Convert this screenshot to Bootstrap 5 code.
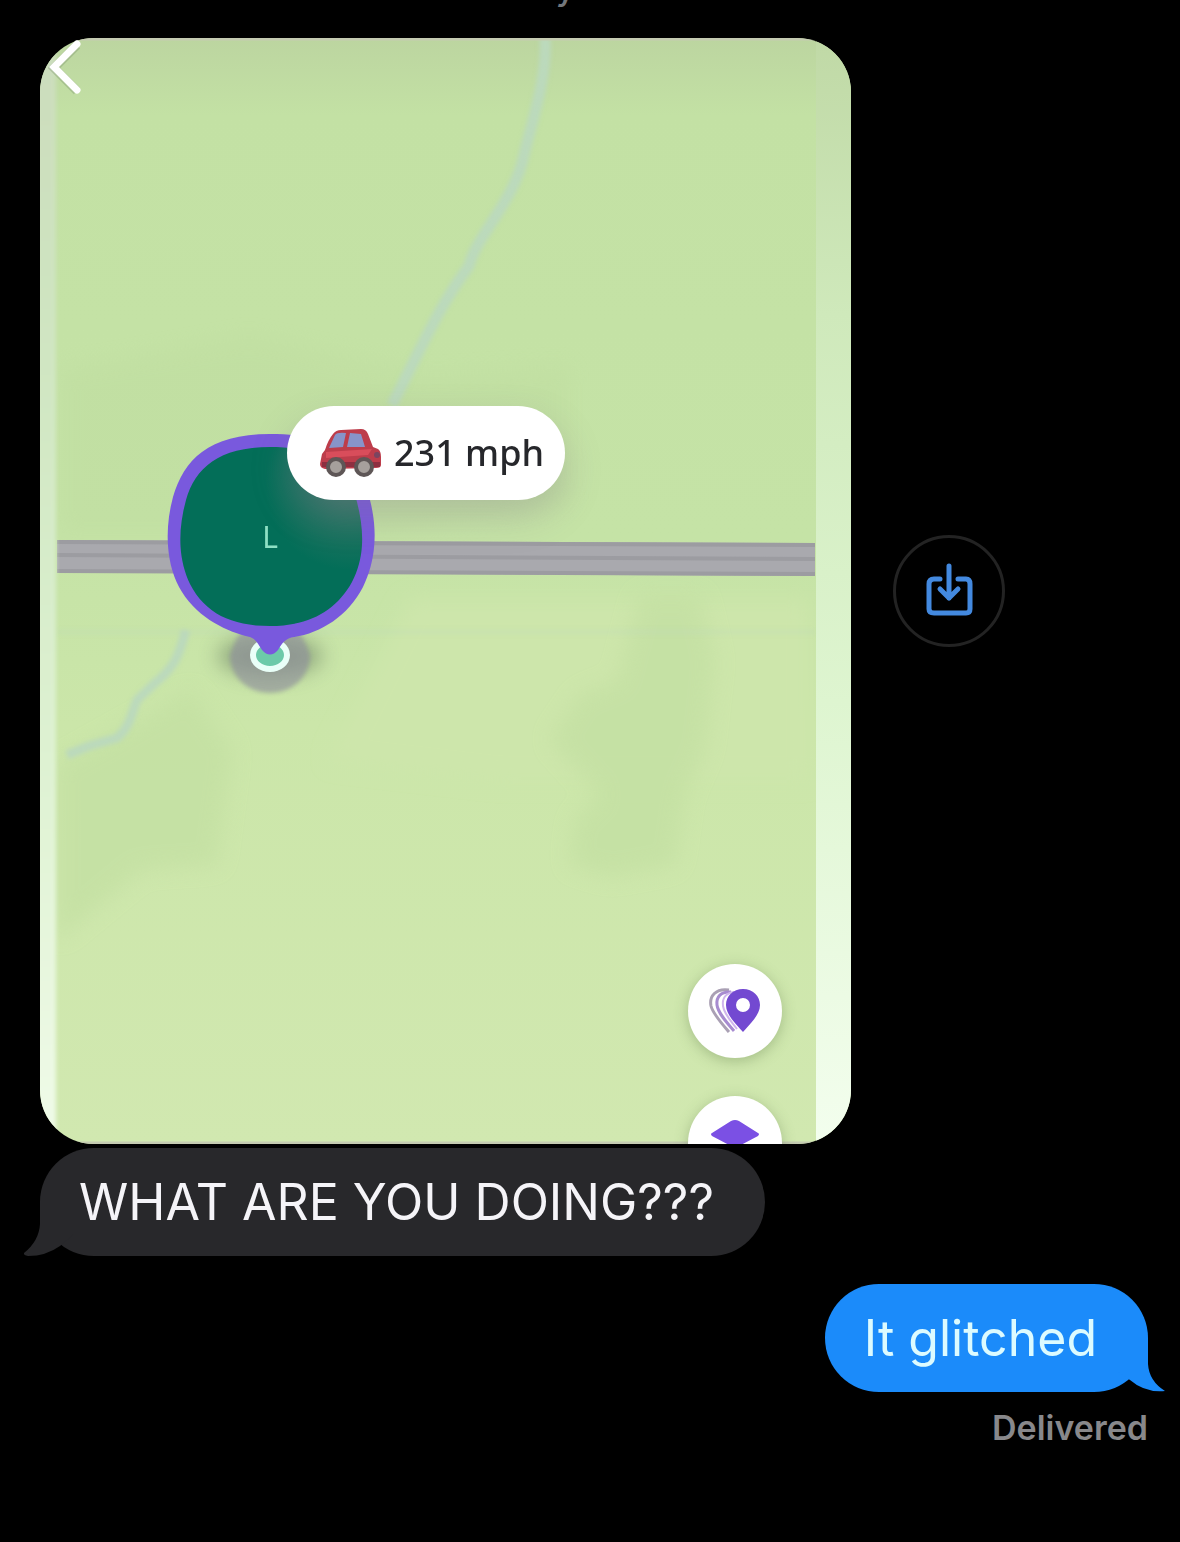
<!DOCTYPE html>
<html lang="en">
<head>
<meta charset="utf-8">
<meta name="viewport" content="width=device-width, initial-scale=1">
<title>Messages</title>
<link href="https://cdn.jsdelivr.net/npm/bootstrap@5.3.0/dist/css/bootstrap.min.css" rel="stylesheet">
<style>
body{background:#000;font-family:Inter,"Liberation Sans",sans-serif;color:#f5f4f8}
.thread{padding:0 32px 0 40px}
.stamp{font-size:34px;line-height:40px;font-weight:500;color:#74777b;margin-top:-32px}
.back-btn{left:48px;top:38px;width:36px;height:58px;z-index:3}
.media-row{gap:42px;margin-top:30px}
.map-shot{flex:0 1 811px;min-width:0;border-radius:54px;overflow:hidden}
.save-btn{width:112px;height:112px;flex:none;border:3px solid #232323}
.speed-pill{left:30.5%;top:33.3%;width:34.2%;height:8.5%;color:#26272b;font-family:"Noto Sans",sans-serif;font-size:36px;font-weight:500;line-height:40px;gap:12px;padding-left:12px;box-shadow:0 16px 36px rgba(125,115,135,.3)}
.pin-letter{left:27.4%;top:43.3%;font-family:"Noto Sans",sans-serif;font-size:30px;line-height:40px;color:#8ee0c4}
.map-btn{left:79.9%;width:94px;height:94px;box-shadow:0 3px 14px rgba(80,110,60,.35)}
.btn-places{top:83.7%}
.btn-layers{top:95.7%}
.bubble{font-size:50px;line-height:60px;padding:24px 51px 24px 39px;border-radius:54px}
.bubble-in{background:#28282b;margin-top:4px}
.bubble-out{background:#1b8bfa;color:#dcfbff;margin-top:28px}
.tail-in{left:-16px;bottom:0}
.tail-out{right:-17px;bottom:0}
.status{font-size:34px;line-height:40px;font-weight:600;color:#88888b;margin-top:16px}
</style>
</head>
<body>
<main class="thread d-flex flex-column position-relative overflow-hidden">
  <div class="stamp text-center">Today 7:51 AM</div>
  <button class="back-btn btn p-0 border-0 position-absolute d-flex" type="button" aria-label="Back">
    <svg width="36" height="58" viewBox="0 0 36 58" fill="none"><path d="M29 7 6 30l23 23" stroke="#78906a" stroke-opacity=".35" stroke-width="9"/><path d="M29 6 6 29l23 23" stroke="#fff" stroke-width="7" stroke-linecap="round" stroke-linejoin="miter"/></svg>
  </button>

  <section class="media-row d-flex align-items-center">
    <figure class="map-shot position-relative m-0">
      <svg class="d-block w-100 h-auto" viewBox="40 38 811 1106" role="img" aria-label="Map with a road and a location pin">
        <defs>
          <linearGradient id="land" x2="0" y2="1"><stop offset="0" stop-color="#bcd5a0"/><stop offset=".07" stop-color="#c3e1a4"/><stop offset=".45" stop-color="#c5e3a6"/><stop offset=".62" stop-color="#cbe6a9"/><stop offset="1" stop-color="#d1e8b0"/></linearGradient>
          <linearGradient id="edgeR" x2="0" y2="1"><stop offset="0" stop-color="#c0d9a6"/><stop offset=".25" stop-color="#cfe9bb"/><stop offset=".6" stop-color="#def5d0"/><stop offset="1" stop-color="#f3feee"/></linearGradient>
          <linearGradient id="edgeL" x2="0" y2="1"><stop offset="0" stop-color="#cbdcbc"/><stop offset=".3" stop-color="#d0e6c2"/><stop offset=".65" stop-color="#def2d2"/><stop offset="1" stop-color="#f0fbe9"/></linearGradient>
          <radialGradient id="sheen" cx="350" cy="485" r="85" gradientUnits="userSpaceOnUse"><stop stop-color="#3d7768"/><stop offset="1" stop-color="#036e58"/></radialGradient>
          <filter id="soft" x="-50%" y="-50%" width="200%" height="200%"><feGaussianBlur stdDeviation="10"/></filter>
          <filter id="faint" x="-20%" y="-20%" width="140%" height="140%"><feGaussianBlur stdDeviation="2"/></filter>
        </defs>
        <path fill="url(#land)" d="M40 38h811v1106H40z"/>
        <path fill="#bedc9f" opacity=".4" filter="url(#soft)" d="M60 370 250 335l180 40 140-10v140l-200 30H60z"/>
        <path fill="#cde6ab" filter="url(#soft)" d="M410 600h400v180H500L330 760z"/>
        <path fill="#c2dfa1" opacity=".65" filter="url(#soft)" d="M640 595h60l15 65-10 90-20 45-10 70-65 12-40-12 5-45 25-25-50-55 30-45 38-15zM57 765l135-75 40 60-15 115-75 5-85 70z"/>
        <g fill="none" stroke="#bbd9bc" filter="url(#faint)">
          <path stroke-width="11" d="M545 38C548 75 531 125 524 155 515 200 475 238 469 266 440 305 425 340 392 405"/>
          <path stroke-width="9" d="M186 630C179 655 175 667 155 683L137 700c-6 15-7 27-20 38l-28 8-22 9"/>
          <path stroke-width="5" opacity=".25" d="M57 632h758"/>
        </g>
        <path fill="#a9a9ae" d="M57 540 815 543v33L57 572z"/>
        <path stroke="#9c9ca1" stroke-width="4" fill="none" d="m57 542 758 3M57 555l758 4M57 571l758 3"/>
        <path fill="url(#edgeL)" filter="url(#faint)" d="M36 30h20v1120H36z"/>
        <path fill="url(#edgeR)" d="M816 38h35v1106h-35z"/>
        <path stroke="#c5cbb2" stroke-width="3" d="M40 39h811M40 1143h811"/>
        <ellipse cx="270" cy="656" rx="52" ry="20" fill="#6b8064" opacity=".6" filter="url(#soft)"/>
        <path d="M230 656a40 37 0 0 0 80 0q-4-16-12-24h-56q-8 8-12 24Z" fill="#8f909c" opacity=".65" filter="url(#faint)"/>
        <ellipse cx="270" cy="655" rx="17" ry="14" fill="#6ccaa9" stroke="#e9fff8" stroke-width="6"/>
        <path fill="#7959dd" d="M270 434C208 434 184 460 173 497 164 530 166 567 182 592 199 619 228 632 250 637c6 2 8 7 12 13q8 9 16 0c4-7 8-12 16-13 27-4 54-21 69-50 15-31 15-66 3-100-14-39-39-53-96-53Z"/>
        <path fill="url(#sheen)" d="M270 447C219 447 195 468 186 500 177 533 179 561 190 584 205 613 231 626 270 626s66-15 82-44c12-23 13-49 5-80-9-35-34-55-87-55Z"/>
      </svg>
      <span class="pin-letter position-absolute">L</span>
      <div class="speed-pill position-absolute bg-white rounded-pill d-flex align-items-center justify-content-center">
        <svg width="62" height="50" viewBox="0 0 62 50" aria-hidden="true">
          <path fill="#bd3d4b" d="M5 22Q8 12 13 6q3-4 8-4l20-1q5 0 7 5l5 13 5 2q3 2 3 8v8q0 3-5 3L5 41q-5-1-5-5l2-10Z"/>
          <path fill="#8794c9" d="m15 7-6 13 14-1 3-14q-9-1-11 2Zm15-2-3 14h18L41 6Z"/>
          <path fill="#d94d5b" d="m6 24 46-3-4 6-42 3Z"/>
          <path fill="#8d2f40" d="M2 34h58v5H2z"/>
          <circle cx="16" cy="39" r="8" fill="#a6a09c" stroke="#5e5656" stroke-width="4"/><circle cx="44" cy="39" r="8" fill="#a6a09c" stroke="#5e5656" stroke-width="4"/>
          <circle cx="57" cy="27" r="3" fill="#7a4560"/>
        </svg>
        <span>231 mph</span>
      </div>
      <button class="map-btn btn-places position-absolute btn bg-white rounded-circle border-0 p-0 d-flex align-items-center justify-content-center" type="button" aria-label="Places">
        <svg width="52" height="46" viewBox="0 0 52 46" fill="none"><path d="M20 2C7 0 0 8 2 18c2 8 12 19 18 26" stroke="#aaa0b4" stroke-width="3"/><path d="M22 4C12 3 7 9 8 17c1 8 10 18 17 26" stroke="#a78bd0" stroke-width="3"/><path d="M25 4c-9 1-12 7-11 14 1 8 8 15 14 23" stroke="#cfb5ec" stroke-width="2"/><path fill="#7349d1" fill-rule="evenodd" d="M34 1c10 0 17 7 17 16 0 10-10 19-17 27-7-8-17-17-17-27C17 8 24 1 34 1Zm0 9a7 7 0 1 0 0 14 7 7 0 0 0 0-14Z"/></svg>
      </button>
      <button class="map-btn btn-layers position-absolute btn bg-white rounded-circle border-0 p-0 d-flex align-items-start justify-content-center pt-4" type="button" aria-label="Layers">
        <svg width="48" height="28" viewBox="0 0 48 28"><path fill="#7b50e4" d="M20 1q4-2 8 0l19 12q2 1 0 3L28 26q-4 2-8 0L1 16q-2-2 0-3Z"/></svg>
      </button>
    </figure>
    <button class="save-btn btn rounded-circle p-0 d-flex align-items-center justify-content-center" type="button" aria-label="Save photo">
      <svg width="48" height="56" viewBox="0 0 48 56" fill="none" stroke="#4389df" stroke-width="5" stroke-linecap="round" stroke-linejoin="round"><path d="M15 16H9q-5 0-5 5v25q0 4 5 4h32q4 0 4-4V21q0-5-4-5h-8"/><path stroke-width="5" d="M24 3v32m-9-9 9 9 9-9"/></svg>
    </button>
  </section>

  <div class="bubble bubble-in align-self-start position-relative">WHAT ARE YOU DOING???
    <svg class="tail-in position-absolute" width="50" height="54" viewBox="0 0 50 54" aria-hidden="true"><path fill="#28282b" d="M16 0v22Q15 39 0 51q-1 2 4 3 18 0 32-10L50 32V0Z"/></svg>
  </div>
  <div class="bubble bubble-out align-self-end position-relative">It glitched
    <svg class="tail-out position-absolute" width="50" height="54" viewBox="0 0 50 54" aria-hidden="true"><path fill="#1b8bfa" d="M33 0v26q1 17 17 27-20 2-35-11L0 32V0Z"/></svg>
  </div>
  <div class="status align-self-end">Delivered</div>
</main>
<script src="https://cdn.jsdelivr.net/npm/bootstrap@5.3.0/dist/js/bootstrap.bundle.min.js"></script>
</body>
</html>
